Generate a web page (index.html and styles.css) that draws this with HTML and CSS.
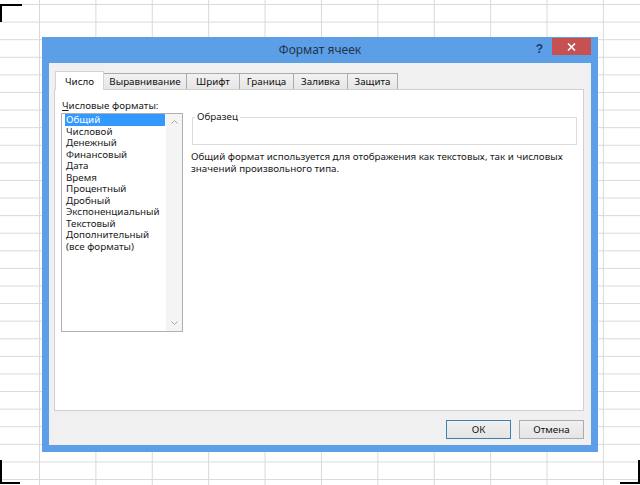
FILE: index.html
```html
<!DOCTYPE html>
<html lang="ru">
<head>
<meta charset="utf-8">
<title>Формат ячеек</title>
<link rel="stylesheet" href="styles.css">
</head>
<body>
<div class="mark mark-tl"></div>
<div class="mark mark-bl"></div>
<div class="mark mark-br"></div>
<div class="dialog">
  <div class="titlebar">
    <div></div>
    <div class="title">Формат ячеек</div>
    <div class="title-buttons">
      <span class="help">?</span>
      <span class="close"><svg width="9" height="8" viewBox="0 0 9 8"><path d="M1 0.5 L8 7.5 M8 0.5 L1 7.5" stroke="#fff" stroke-width="1.6" fill="none"/></svg></span>
    </div>
  </div>
  <div class="content">
    <div class="tabs">
      <div class="tab active">Число</div>
      <div class="tab">Выравнивание</div>
      <div class="tab">Шрифт</div>
      <div class="tab">Граница</div>
      <div class="tab">Заливка</div>
      <div class="tab">Защита</div>
    </div>
    <div class="panel">
      <div class="formats">
        <div class="label"><u>Ч</u>исловые форматы:</div>
        <div class="listbox">
          <ul class="items">
            <li class="selected">Общий</li>
            <li>Числовой</li>
            <li>Денежный</li>
            <li>Финансовый</li>
            <li>Дата</li>
            <li>Время</li>
            <li>Процентный</li>
            <li>Дробный</li>
            <li>Экспоненциальный</li>
            <li>Текстовый</li>
            <li>Дополнительный</li>
            <li>(все форматы)</li>
          </ul>
          <div class="scrollbar">
            <svg width="7" height="4" viewBox="0 0 7 4"><path d="M0.5 3.5 L3.5 0.5 L6.5 3.5" fill="none" stroke="#a6a6a6" stroke-width="1"/></svg>
            <svg width="7" height="4" viewBox="0 0 7 4"><path d="M0.5 0.5 L3.5 3.5 L6.5 0.5" fill="none" stroke="#a6a6a6" stroke-width="1"/></svg>
          </div>
        </div>
      </div>
      <div class="sample-col">
        <fieldset class="sample">
          <legend>Образец</legend>
          <div class="sample-body"></div>
        </fieldset>
        <p class="desc">Общий формат используется для отображения как текстовых, так и числовых<br>значений произвольного типа.</p>
      </div>
    </div>
    <div class="buttons">
      <button class="btn default">ОК</button>
      <button class="btn">Отмена</button>
    </div>
  </div>
</div>
</body>
</html>
```
FILE: styles.css
```css
* { box-sizing: border-box; }
html, body { margin: 0; padding: 0; }
body {
  width: 640px;
  height: 485px;
  overflow: hidden;
  position: relative;
  padding: 37px 0 0 42px;
  background-color: #fff;
  background-image:
    linear-gradient(to right, #d9d9d9 1px, transparent 1px),
    linear-gradient(to bottom, #d9d9d9 1px, transparent 1px);
  background-size: 56.4px 100%, 100% 17.6px;
  background-position: 39px 0, 0 4px;
  font-family: "Noto Sans", "Open Sans", sans-serif;
  color: #1a1a1a;
}

.mark { position: absolute; border: 0 solid #000; }
.mark-tl { left: 0; top: 4px; width: 22px; height: 18px; border-top-width: 2px; border-left-width: 2px; }
.mark-bl { left: 0; top: 460px; width: 20px; height: 24px; border-left-width: 2px; border-bottom-width: 2px; }
.mark-br { right: 0; top: 460px; width: 20px; height: 24px; border-right-width: 2px; border-bottom-width: 2px; }

.dialog {
  width: 556px;
  height: 415px;
  background: #5c9fe6;
  padding: 0 7px 7px;
  display: flex;
  flex-direction: column;
}

.titlebar {
  height: 26px;
  margin: 0 -7px;
  display: grid;
  grid-template-columns: 1fr auto 1fr;
}
.title {
  align-self: center;
  font-size: 12px;
  line-height: 14px;
  color: #22344c;
}
.title-buttons {
  display: flex;
  justify-content: flex-end;
  align-items: flex-start;
  padding-right: 7px;
}
.help {
  margin-top: 5px;
  margin-right: 9px;
  font-family: "Liberation Sans", sans-serif;
  font-weight: bold;
  font-size: 12px;
  line-height: 14px;
  color: #1d3a6c;
}
.close {
  width: 39px;
  height: 17px;
  margin-top: 1px;
  background: #c75050;
  display: flex;
  align-items: center;
  justify-content: center;
}

.content {
  flex: 1;
  background: #f0f0f0;
  padding: 8px 7px 6px 5px;
  display: flex;
  flex-direction: column;
}

.tabs {
  height: 19px;
  margin-left: 1px;
  display: flex;
  align-items: flex-end;
  position: relative;
  z-index: 1;
}
.tab {
  height: 16px;
  margin-bottom: 1px;
  margin-left: -1px;
  border: 1px solid #acacac;
  border-bottom: none;
  background: linear-gradient(#f2f2f2, #e6e6e6);
  font-size: 9.8px;
  color: #111;
  display: flex;
  align-items: center;
  justify-content: center;
}
.tab:nth-child(1) { width: 49px; margin-left: 0; }
.tab:nth-child(2) { width: 84px; }
.tab:nth-child(3) { width: 54px; }
.tab:nth-child(4) { width: 55px; }
.tab:nth-child(5) { width: 55px; }
.tab:nth-child(6) { width: 51px; }
.tab.active {
  height: 19px;
  margin-bottom: 0;
  background: #fff;
  border-color: #d4d4d4;
  position: relative;
  z-index: 2;
}

.panel {
  margin-top: -1px;
  height: 322px;
  background: #fff;
  border: 1px solid #d0d0d0;
  padding: 10px 6px 0 6px;
  display: flex;
  align-items: flex-start;
}

.formats {
  width: 122px;
  display: flex;
  flex-direction: column;
}
.label {
  font-size: 9.8px;
  line-height: 12px;
  padding-left: 1px;
  margin-bottom: 1px;
}
.listbox {
  height: 219px;
  border: 1px solid #b0b0b0;
  display: flex;
}
.items {
  flex: 1;
  list-style: none;
  margin: 0;
  padding: 0 1px 0 3px;
}
.items li {
  font-size: 9.8px;
  line-height: 11.55px;
  padding-left: 1px;
  white-space: nowrap;
}
.items li.selected {
  background: #3399ff;
  color: #fff;
}
.scrollbar {
  width: 16px;
  background: #f4f4f4;
  padding: 6px 0;
  display: flex;
  flex-direction: column;
  justify-content: space-between;
  align-items: center;
}
.scrollbar svg { display: block; }

.sample-col {
  flex: 1;
  margin-left: 8px;
  padding-top: 11px;
}
.sample {
  margin: 0 0 0 1px;
  padding: 0;
  border: 1px solid #dcdcdc;
  min-width: 0;
}
.sample legend {
  font-size: 9.8px;
  line-height: 12px;
  padding: 0 2px;
  margin-left: 2px;
}
.sample-body { height: 21px; }
.desc {
  margin: 6px 0 0;
  font-size: 9.8px;
  line-height: 11.5px;
}

.buttons {
  margin-top: 9px;
  display: flex;
  justify-content: flex-end;
  gap: 8px;
}
.btn {
  width: 65px;
  height: 19px;
  padding: 0;
  border: 1px solid #acacac;
  background: linear-gradient(#f0f0f0, #e5e5e5);
  font-family: "Noto Sans", "Open Sans", sans-serif;
  font-size: 9.8px;
  color: #111;
}
.btn.default { border-color: #3c7fb1; }
```
